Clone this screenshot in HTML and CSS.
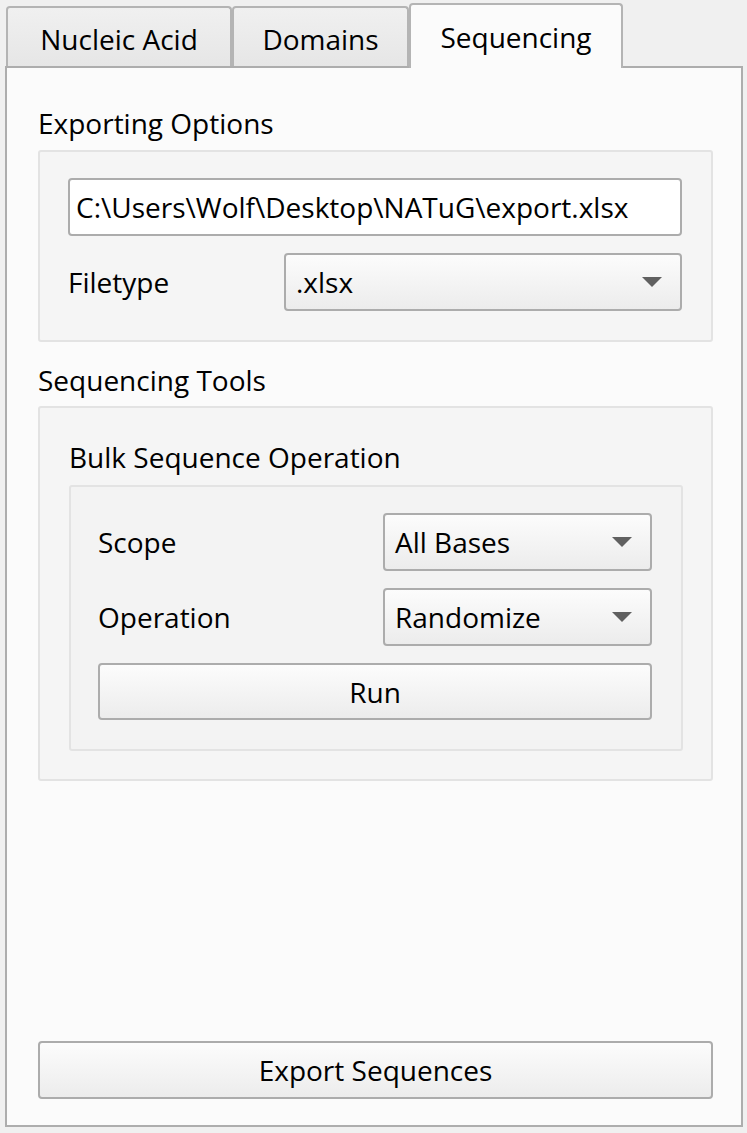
FILE: index.html
```html
<!DOCTYPE html>
<html>
<head>
<meta charset="utf-8">
<link rel="stylesheet" href="styles.css">
</head>
<body>
<div class="window">
  <div class="tabs">
    <div class="tab tab-1">Nucleic Acid</div>
    <div class="tab tab-2">Domains</div>
    <div class="tab tab-3 active">Sequencing</div>
  </div>
  <div class="panel">
    <div class="label top-label">Exporting Options</div>
    <div class="group group-export">
      <div class="field">C:\Users\Wolf\Desktop\NATuG\export.xlsx</div>
      <div class="row filetype-row">
        <div class="label">Filetype</div>
        <div class="combo"><span>.xlsx</span><span class="arrow"></span></div>
      </div>
    </div>
    <div class="label section-label">Sequencing Tools</div>
    <div class="group group-tools">
      <div class="label">Bulk Sequence Operation</div>
      <div class="group inner">
        <div class="row op-row">
          <div class="label">Scope</div>
          <div class="combo"><span>All Bases</span><span class="arrow"></span></div>
        </div>
        <div class="row op-row">
          <div class="label">Operation</div>
          <div class="combo"><span>Randomize</span><span class="arrow"></span></div>
        </div>
        <div class="button">Run</div>
      </div>
    </div>
    <div class="button export">Export Sequences</div>
  </div>
</div>
</body>
</html>
```
FILE: styles.css
```css
* { box-sizing: border-box; }
html, body {
  margin: 0;
  padding: 0;
  background: #f0f0f0;
}
body {
  font-family: "Open Sans", "Noto Sans", sans-serif;
  font-size: 28px;
  color: #000;
  width: 747px;
  height: 1133px;
  overflow: hidden;
}
.window {
  padding: 3px 4px 6px 5px;
  height: 1133px;
  display: flex;
  flex-direction: column;
}
.tabs {
  display: flex;
  align-items: flex-end;
  padding-left: 1px;
  height: 63px;
  flex: none;
}
.tab {
  height: 60px;
  border: 2px solid #b4b4b4;
  border-bottom: none;
  border-radius: 4px 4px 0 0;
  background: linear-gradient(#f0f0f0, #e6e6e6);
  display: flex;
  align-items: center;
  justify-content: center;
  padding-top: 4px;
  line-height: 34px;
}
.tab-1 { width: 226px; }
.tab-2 { width: 177px; }
.tab-3 {
  width: 214px;
  height: 65px;
  margin-bottom: -2px;
  background: #fbfbfb;
  position: relative;
  z-index: 1;
  padding-top: 0;
  padding-bottom: 0;
}
.panel {
  flex: 1;
  border: 2px solid #adadad;
  background: #fbfbfb;
  padding: 38px 28px 26px 31px;
  display: flex;
  flex-direction: column;
}
.label {
  line-height: 34px;
  height: 34px;
  white-space: nowrap;
}
.group {
  border: 2px solid #e3e3e3;
  border-radius: 3px;
  background: #f5f5f5;
}
.group-export {
  margin-top: 10px;
  padding: 26px 29px 29px 28px;
  display: flex;
  flex-direction: column;
  gap: 17px;
}
.field {
  height: 58px;
  border: 2px solid #acacac;
  border-radius: 4px;
  background: #fff;
  padding-left: 6px;
  display: flex;
  align-items: center;
  white-space: nowrap;
}
.row {
  display: flex;
  align-items: center;
}
.filetype-row .label { width: 216px; flex: none; }
.combo {
  flex: 1;
  height: 58px;
  border: 2px solid #acacac;
  border-radius: 4px;
  background: linear-gradient(#fcfcfc, #ececec);
  display: flex;
  align-items: center;
  justify-content: space-between;
  padding: 0 18px 0 10px;
}
.arrow {
  width: 0;
  height: 0;
  border-left: 10px solid transparent;
  border-right: 10px solid transparent;
  border-top: 10px solid #606060;
}
.section-label { margin-top: 21px; }
.group-tools {
  margin-top: 9px;
  padding: 32px 28px 28px 29px;
  display: flex;
  flex-direction: column;
}
.inner {
  margin-top: 11px;
  background: #f3f3f3;
  padding: 26px 29px 29px 27px;
  display: flex;
  flex-direction: column;
  gap: 17px;
}
.op-row .label { width: 285px; flex: none; }
.button {
  height: 57px;
  border: 2px solid #acacac;
  border-radius: 4px;
  background: linear-gradient(#fcfcfc, #ececec);
  display: flex;
  align-items: center;
  justify-content: center;
}
.export {
  margin-top: auto;
  height: 58px;
}
```
